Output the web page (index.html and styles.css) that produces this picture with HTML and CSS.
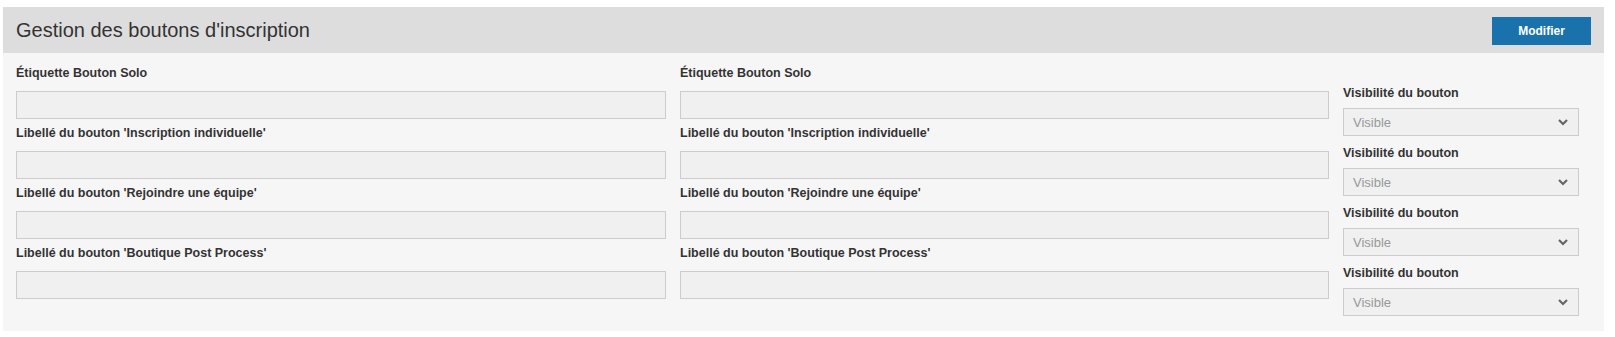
FILE: index.html
```html
<!DOCTYPE html>
<html lang="fr">
<head>
<meta charset="utf-8">
<title>Gestion des boutons d'inscription</title>
<link rel="stylesheet" href="styles.css">
</head>
<body>
<div class="panel">
  <div class="panel-head">
    <h2 class="panel-title">Gestion des boutons d'inscription</h2>
    <button class="btn-primary" type="button">Modifier</button>
  </div>
  <div class="panel-body">
    <div class="col col-text">
      <div class="field"><label class="lbl">Étiquette Bouton Solo</label><div class="input"></div></div>
      <div class="field"><label class="lbl">Libellé du bouton 'Inscription individuelle'</label><div class="input"></div></div>
      <div class="field"><label class="lbl">Libellé du bouton 'Rejoindre une équipe'</label><div class="input"></div></div>
      <div class="field"><label class="lbl">Libellé du bouton 'Boutique Post Process'</label><div class="input"></div></div>
    </div>
    <div class="col col-text">
      <div class="field"><label class="lbl">Étiquette Bouton Solo</label><div class="input"></div></div>
      <div class="field"><label class="lbl">Libellé du bouton 'Inscription individuelle'</label><div class="input"></div></div>
      <div class="field"><label class="lbl">Libellé du bouton 'Rejoindre une équipe'</label><div class="input"></div></div>
      <div class="field"><label class="lbl">Libellé du bouton 'Boutique Post Process'</label><div class="input"></div></div>
    </div>
    <div class="col col-select">
      <div class="sfield"><label class="lbl">Visibilité du bouton</label><div class="select"><span>Visible</span><svg class="chev" width="10" height="7" viewBox="0 0 10 7"><polyline points="1,1 5,5 9,1" fill="none" stroke="#666" stroke-width="2.2"/></svg></div></div>
      <div class="sfield"><label class="lbl">Visibilité du bouton</label><div class="select"><span>Visible</span><svg class="chev" width="10" height="7" viewBox="0 0 10 7"><polyline points="1,1 5,5 9,1" fill="none" stroke="#666" stroke-width="2.2"/></svg></div></div>
      <div class="sfield"><label class="lbl">Visibilité du bouton</label><div class="select"><span>Visible</span><svg class="chev" width="10" height="7" viewBox="0 0 10 7"><polyline points="1,1 5,5 9,1" fill="none" stroke="#666" stroke-width="2.2"/></svg></div></div>
      <div class="sfield"><label class="lbl">Visibilité du bouton</label><div class="select"><span>Visible</span><svg class="chev" width="10" height="7" viewBox="0 0 10 7"><polyline points="1,1 5,5 9,1" fill="none" stroke="#666" stroke-width="2.2"/></svg></div></div>
    </div>
  </div>
</div>
</body>
</html>
```
FILE: styles.css
```css
html, body {
  margin: 0;
  padding: 0;
  background: #ffffff;
  font-family: "Liberation Sans", Arial, sans-serif;
  color: #333333;
}
.panel {
  margin: 7px 0 0 3px;
  width: 1601px;
  background: #f6f6f6;
}
.panel-head {
  height: 46px;
  background: #dddddd;
  display: flex;
  align-items: center;
  justify-content: space-between;
  padding: 0 13px 0 13px;
  box-sizing: border-box;
}
.panel-title {
  margin: 0;
  font-size: 20px;
  font-weight: normal;
  color: #333333;
  line-height: 24px;
}
.btn-primary {
  width: 99px;
  height: 28px;
  margin-top: 1px;
  border: none;
  background: #1a72ac;
  color: #ffffff;
  font-family: "Liberation Sans", Arial, sans-serif;
  font-weight: bold;
  font-size: 12px;
  padding: 0;
}
.panel-body {
  display: grid;
  grid-template-columns: 650px 649px 236px;
  column-gap: 14px;
  padding: 12px 0 15px 13px;
}
.col-select {
  padding-top: 20px;
}
.lbl {
  display: block;
  font-size: 12.5px;
  font-weight: bold;
  line-height: 16px;
  color: #333333;
}
.field .lbl { margin-bottom: 10px; }
.field { margin-bottom: 6px; }
.input {
  height: 28px;
  box-sizing: border-box;
  background: #f0f0f0;
  border: 1px solid #cccccc;
}
.sfield .lbl { margin-bottom: 7px; }
.sfield { margin-bottom: 9px; }
.sfield:last-child { margin-bottom: 0; }
.select {
  height: 28px;
  box-sizing: border-box;
  background: #f0f0f0;
  border: 1px solid #cccccc;
  display: flex;
  align-items: center;
  justify-content: space-between;
  padding: 0 10px 0 9px;
  font-size: 13px;
  color: #999999;
}
.chev { display: block; }
```
